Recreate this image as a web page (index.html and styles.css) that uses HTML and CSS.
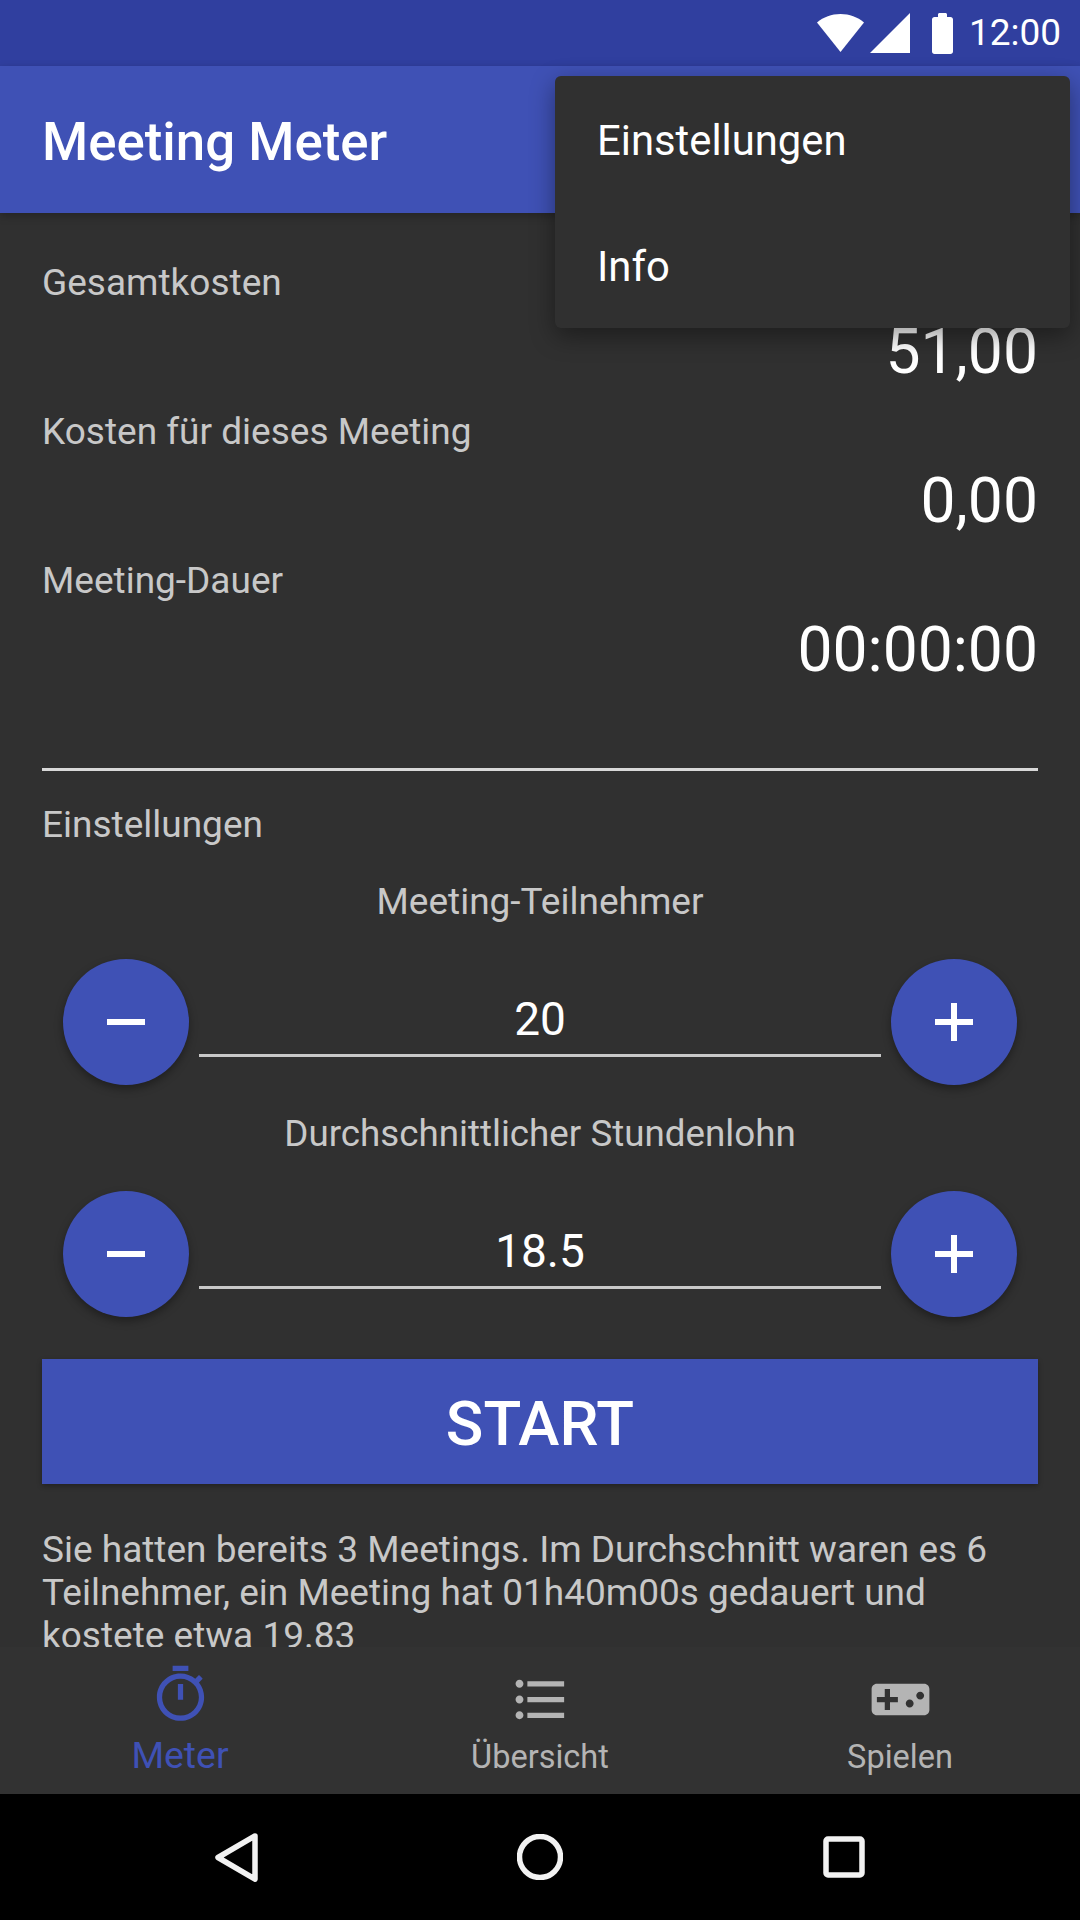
FILE: index.html
```html
<!DOCTYPE html>
<html lang="de">
<head>
<meta charset="utf-8">
<title>Meeting Meter</title>
<link rel="stylesheet" href="styles.css">
</head>
<body>
<div class="screen">
  <div class="status">
    <svg class="st-wifi" viewBox="0 0 47 38"><path d="M23.5 38 0 8.5C6.5 3 14.500 0 23.500 0S40.500 3 47 8.500z"/></svg>
    <svg class="st-signal" viewBox="0 0 40 40"><path d="M0 40 40 0v40z"/></svg>
    <svg class="st-battery" viewBox="0 0 21 41"><path d="M6 4V1.500C6 .7 6.700 0 7.500 0h6c.8 0 1.500.7 1.500 1.500V4h3.500C19.900 4 21 5.100 21 6.500v32c0 1.400-1.100 2.500-2.500 2.500h-16C1.100 41 0 39.900 0 38.500v-32C0 5.100 1.100 4 2.500 4z"/></svg>
    <span class="st-time">12:00</span>
  </div>
  <header class="appbar"><h1 class="title">Meeting Meter</h1></header>
  <main class="content">
    <section class="stats">
      <div class="label">Gesamtkosten</div>
      <div class="value">51,00</div>
      <div class="label">Kosten für dieses Meeting</div>
      <div class="value">0,00</div>
      <div class="label">Meeting-Dauer</div>
      <div class="value">00:00:00</div>
    </section>
    <div class="divider"></div>
    <div class="label settings-label">Einstellungen</div>
    <div class="label centered">Meeting-Teilnehmer</div>
    <div class="stepper">
      <div class="fab"><svg viewBox="0 0 38 6"><path d="M0 0h38v6H0z"/></svg></div>
      <div class="field">20</div>
      <div class="fab"><svg viewBox="0 0 38 38"><path d="M16 0h6v16h16v6H22v16h-6V22H0v-6h16z"/></svg></div>
    </div>
    <div class="label centered wage">Durchschnittlicher Stundenlohn</div>
    <div class="stepper">
      <div class="fab"><svg viewBox="0 0 38 6"><path d="M0 0h38v6H0z"/></svg></div>
      <div class="field">18.5</div>
      <div class="fab"><svg viewBox="0 0 38 38"><path d="M16 0h6v16h16v6H22v16h-6V22H0v-6h16z"/></svg></div>
    </div>
    <button class="start">START</button>
    <p class="summary">Sie hatten bereits 3 Meetings. Im Durchschnitt waren es 6 Teilnehmer, ein Meeting hat 01h40m00s gedauert und kostete etwa 19.83</p>
  </main>
  <nav class="tabs">
    <div class="tab active">
      <svg class="tab-icon" viewBox="0 0 24 24"><path d="M15 1H9v2h6V1zm-4 13h2V8h-2v6zm8.030-6.610 1.420-1.420c-.43-.51-.9-.99-1.410-1.410l-1.420 1.420C16.070 4.740 14.120 4 12 4c-4.970 0-9 4.030-9 9s4.020 9 9 9 9-4.030 9-9c0-2.120-.74-4.070-1.970-5.610zM12 20c-3.870 0-7-3.130-7-7s3.130-7 7-7 7 3.130 7 7-3.130 7-7 7z"/></svg>
      <span class="tab-text">Meter</span>
    </div>
    <div class="tab">
      <svg class="tab-icon" viewBox="0 0 24 24"><path d="M4 10.500c-.83 0-1.500.67-1.500 1.500s.67 1.500 1.500 1.500 1.500-.67 1.500-1.500-.67-1.500-1.500-1.500zm0-6c-.83 0-1.500.67-1.500 1.500S3.170 7.500 4 7.500 5.500 6.830 5.500 6 4.830 4.500 4 4.500zm0 12c-.83 0-1.500.68-1.500 1.500s.68 1.500 1.500 1.500 1.500-.68 1.500-1.500-.67-1.500-1.500-1.500zM7 19h14v-2H7v2zm0-6h14v-2H7v2zm0-8v2h14V5H7z"/></svg>
      <span class="tab-text">Übersicht</span>
    </div>
    <div class="tab">
      <svg class="tab-icon" viewBox="0 0 24 24"><path d="M21 6H3c-1.100 0-2 .9-2 2v8c0 1.100.9 2 2 2h18c1.100 0 2-.9 2-2V8c0-1.100-.9-2-2-2zm-10 7H8v3H6v-3H3v-2h3V8h2v3h3v2zm4.500 2c-.83 0-1.500-.67-1.500-1.500s.67-1.500 1.500-1.500 1.500.67 1.500 1.500-.67 1.500-1.500 1.500zm4-3c-.83 0-1.500-.67-1.500-1.500S18.670 9 19.500 9s1.500.67 1.500 1.500-.67 1.500-1.500 1.500z"/></svg>
      <span class="tab-text">Spielen</span>
    </div>
  </nav>
  <div class="sysnav">
    <svg class="sys-back" viewBox="0 0 43 49"><path d="M40 3 3 24.500 40 46z"/></svg>
    <svg class="sys-home" viewBox="0 0 46 46"><circle cx="23" cy="23" r="20.500"/></svg>
    <svg class="sys-recent" viewBox="0 0 42 42"><rect x="3" y="3" width="36" height="36" rx="2"/></svg>
  </div>
  <div class="menu">
    <div class="menu-item">Einstellungen</div>
    <div class="menu-item">Info</div>
  </div>
</div>
</body>
</html>
```

FILE: styles.css
```css
* { box-sizing: border-box; }
html, body { margin: 0; padding: 0; }
body { font-family: Roboto, "Liberation Sans", sans-serif; background: #000; }
.screen { position: relative; width: 1080px; height: 1920px; display: flex; flex-direction: column; overflow: hidden; background: #303030; }

.status { height: 66px; flex: none; background: #303f9f; display: flex; align-items: center; justify-content: flex-end; padding-right: 19px; }
.status svg { fill: #fff; display: block; }
.st-wifi { width: 47px; height: 38px; margin-right: 6px; }
.st-signal { width: 40px; height: 40px; margin-right: 22px; }
.st-battery { width: 21px; height: 41px; margin-right: 16px; }
.st-time { color: #fff; font-size: 37px; line-height: 66px; width: 92px; text-align: right; }

.appbar { height: 147px; flex: none; background: #3f51b5; display: flex; align-items: center; padding: 4px 0 0 42px; box-shadow: 0 3px 8px rgba(0,0,0,.25); z-index: 1; }
.title { margin: 0; color: #fff; font-size: 52.8px; font-weight: 500; }

.content { flex: 1; min-height: 0; overflow: hidden; padding: 0 42px; }
.stats { padding-top: 45px; }
.label { color: #c8c8c8; font-size: 37px; line-height: 50px; }
.value { color: #fff; font-size: 62.4px; line-height: 72px; text-align: right; height: 91px; margin-top: 8px; }
.divider { height: 3px; background: #d8d8d8; margin-top: 63px; }
.settings-label { margin-top: 29px; }
.centered { text-align: center; margin-top: 27px; }
.wage { font-size: 36.75px; }

.stepper { display: flex; align-items: flex-start; padding: 0 21px; margin-top: 32px; height: 126px; }
.stepper + .label { margin-top: 24px; }
.fab { width: 126px; height: 126px; flex: none; border-radius: 50%; background: #3f51b5; box-shadow: 0 4px 8px rgba(0,0,0,.35); display: flex; align-items: center; justify-content: center; }
.fab svg { width: 38px; fill: #fff; display: block; }
.field { flex: 1; margin: 0 10px; height: 98px; padding-top: 32px; border-bottom: 3px solid #c8c8c8; color: #fff; font-size: 46px; line-height: 56px; text-align: center; }

.start { display: block; width: 100%; height: 125px; margin-top: 42px; padding: 4px 0 0; border: 0; background: #3f51b5; color: #fff; font: 500 62px Roboto, sans-serif; box-shadow: 0 2px 5px rgba(0,0,0,.3); }
.summary { margin: 44px 0 0; color: #c8c8c8; font-size: 37px; line-height: 43px; }

.tabs { height: 147px; flex: none; background: #323232; display: grid; grid-template-columns: repeat(3, 1fr); z-index: 1; }
.tab { display: flex; flex-direction: column; align-items: center; padding-top: 21px; color: #b4b4b4; }
.tab-icon { width: 63px; height: 63px; fill: currentColor; display: block; }
.tab-text { font-size: 32.5px; line-height: 44px; margin-top: 4px; }
.tab.active { color: #3f51b5; padding-top: 16px; }
.tab.active .tab-text { font-size: 37.4px; margin-top: 7px; }

.sysnav { height: 126px; flex: none; background: #000; display: grid; grid-template-columns: repeat(3, 1fr); align-items: center; justify-items: center; padding: 0 84px; }
.sysnav svg { fill: none; stroke: #f2f2f2; stroke-width: 5.5; stroke-linejoin: round; display: block; }
.sys-back { width: 43px; height: 49px; }
.sys-home { width: 46px; height: 46px; }
.sys-recent { width: 42px; height: 42px; }

.menu { position: absolute; left: 555px; top: 76px; width: 515px; height: 252px; background: #303030; border-radius: 6px; box-shadow: 0 8px 24px rgba(0,0,0,.4); z-index: 2; }
.menu-item { height: 126px; padding: 2px 0 0 42px; color: #fff; font-size: 41.8px; line-height: 126px; }
```
